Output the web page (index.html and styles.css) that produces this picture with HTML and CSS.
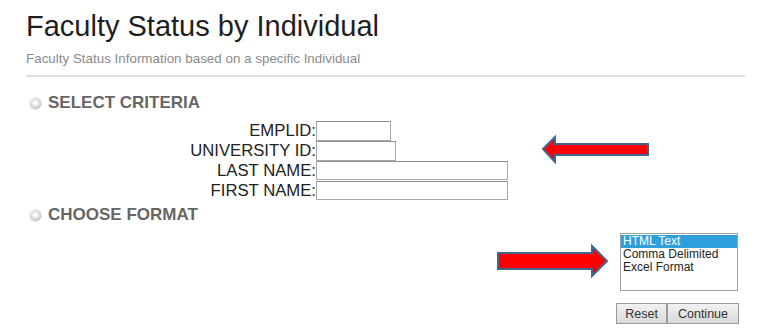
FILE: index.html
```html
<!DOCTYPE html>
<html lang="en">
<head>
  <meta charset="UTF-8" />
  <meta name="viewport" content="width=device-width, initial-scale=1.0"/>
  <title>Faculty Status by Individual</title>
  <link rel="stylesheet" href="styles.css">
</head>
<body>

  <h1 class="page-title">Faculty Status by Individual</h1>
  <p class="page-desc">Faculty Status Information based on a specific Individual</p>
  <hr class="divider">

  <h2 class="section-head">
    <svg class="bullet" width="13" height="13" viewBox="0 0 12 12">
      <defs>
        <radialGradient id="ball" cx="40%" cy="35%" r="70%">
          <stop offset="0" stop-color="#f7f7f7"/>
          <stop offset="1" stop-color="#c6c6c6"/>
        </radialGradient>
      </defs>
      <circle cx="6" cy="6" r="5.7" fill="url(#ball)"/>
      <path d="M3.5 6 H8 M6 4 L8 6 L6 8" fill="none" stroke="#fff" stroke-width="1.4"/>
    </svg>
    SELECT CRITERIA
  </h2>

  <div class="criteria">
    <label for="emplid">EMPLID:</label>
    <input type="text" id="emplid" class="w-sm">
    <label for="univid">UNIVERSITY ID:</label>
    <input type="text" id="univid" class="w-md">
    <label for="lastname">LAST NAME:</label>
    <input type="text" id="lastname" class="w-lg">
    <label for="firstname">FIRST NAME:</label>
    <input type="text" id="firstname" class="w-lg">
  </div>

  <h2 class="section-head">
    <svg class="bullet" width="13" height="13" viewBox="0 0 12 12">
      <circle cx="6" cy="6" r="5.7" fill="url(#ball)"/>
      <path d="M3.5 6 H8 M6 4 L8 6 L6 8" fill="none" stroke="#fff" stroke-width="1.4"/>
    </svg>
    CHOOSE FORMAT
  </h2>

  <div class="format">
    <div class="listbox">
      <div class="option selected">HTML Text</div>
      <div class="option">Comma Delimited</div>
      <div class="option">Excel Format</div>
    </div>
    <div class="actions">
      <button class="btn">Reset</button><button class="btn">Continue</button>
    </div>
  </div>

  <!-- annotation arrows -->
  <svg class="arrow arrow-left" width="110" height="30" viewBox="0 0 110 30">
    <path d="M2 14 L14 2 L14 9 L107 9 L107 20 L14 20 L14 27 Z" fill="#ff0000" stroke="#41668f" stroke-width="2"/>
  </svg>
  <svg class="arrow arrow-right" width="114" height="34" viewBox="0 0 114 34">
    <path d="M2 9 L96 9 L96 2 L111 17 L96 32 L96 25 L2 25 Z" fill="#ff0000" stroke="#41668f" stroke-width="2"/>
  </svg>

</body>
</html>
```

FILE: styles.css
```css
body {
  font-family: 'Liberation Sans', Arial, sans-serif;
  color: #222;
  background: #fff;
  margin: 0;
  padding: 0 23px 0 26px;
  position: relative;
  width: 719px;
  height: 330px;
  overflow: hidden;
}

.page-title {
  font-size: 29px;
  font-weight: normal;
  line-height: 34px;
  margin: 9px 0 0;
  color: #1e1e1e;
}

.page-desc {
  font-size: 13.4px;
  line-height: 16px;
  color: #8a8a8a;
  margin: 8px 0 0;
}

.divider {
  border: none;
  height: 2px;
  background: #dedede;
  margin: 8px 0 0;
}

.section-head {
  display: flex;
  align-items: center;
  gap: 6px;
  font-size: 17px;
  line-height: 20px;
  font-weight: bold;
  color: #666;
  margin: 16px 0 0 3px;
}

.criteria {
  display: grid;
  grid-template-columns: 290px auto;
  grid-auto-rows: 20px;
  margin-top: 8px;
  font-size: 16.7px;
  line-height: 20px;
  color: #222;
}

.criteria label {
  text-align: right;
}

.criteria input {
  box-sizing: border-box;
  height: 20px;
  margin: 0;
  padding: 0 2px;
  border: 1px solid #a9a9a9;
  border-top-color: #8e8e8e;
  background: #fff;
  font: 13px 'Liberation Sans', sans-serif;
}

.criteria input.w-sm { width: 75px; }
.criteria input.w-md { width: 80px; }
.criteria input.w-lg { width: 192px; height: 19px; }

.criteria + .section-head {
  margin-top: 4px;
}

.format {
  display: flex;
  flex-direction: column;
  align-items: flex-end;
  margin: 8px 7px 0 0;
}

.listbox {
  box-sizing: border-box;
  width: 118px;
  height: 58px;
  border: 1px solid #a0a0a0;
  background: #fff;
  font-size: 12px;
  line-height: 13px;
  color: #222;
  padding-top: 1px;
}

.option {
  padding-left: 2px;
  white-space: nowrap;
}

.option.selected {
  background: #2f9fdc;
  color: #fff;
}

.actions {
  display: flex;
  margin-top: 12px;
  margin-right: -1px;
}

.btn {
  font: 12.5px 'Liberation Sans', sans-serif;
  color: #333;
  height: 21px;
  padding: 0 8px;
  margin: 0;
  border: 1px solid #9a9a9a;
  background: linear-gradient(#f2f2f2, #d9d9d9);
  cursor: pointer;
}

.btn + .btn {
  border-left: 1px solid #9a9a9a;
  padding: 0 10px;
}

.arrow {
  position: absolute;
}

.arrow-left {
  left: 541px;
  top: 135px;
}

.arrow-right {
  left: 496px;
  top: 244px;
}
```
